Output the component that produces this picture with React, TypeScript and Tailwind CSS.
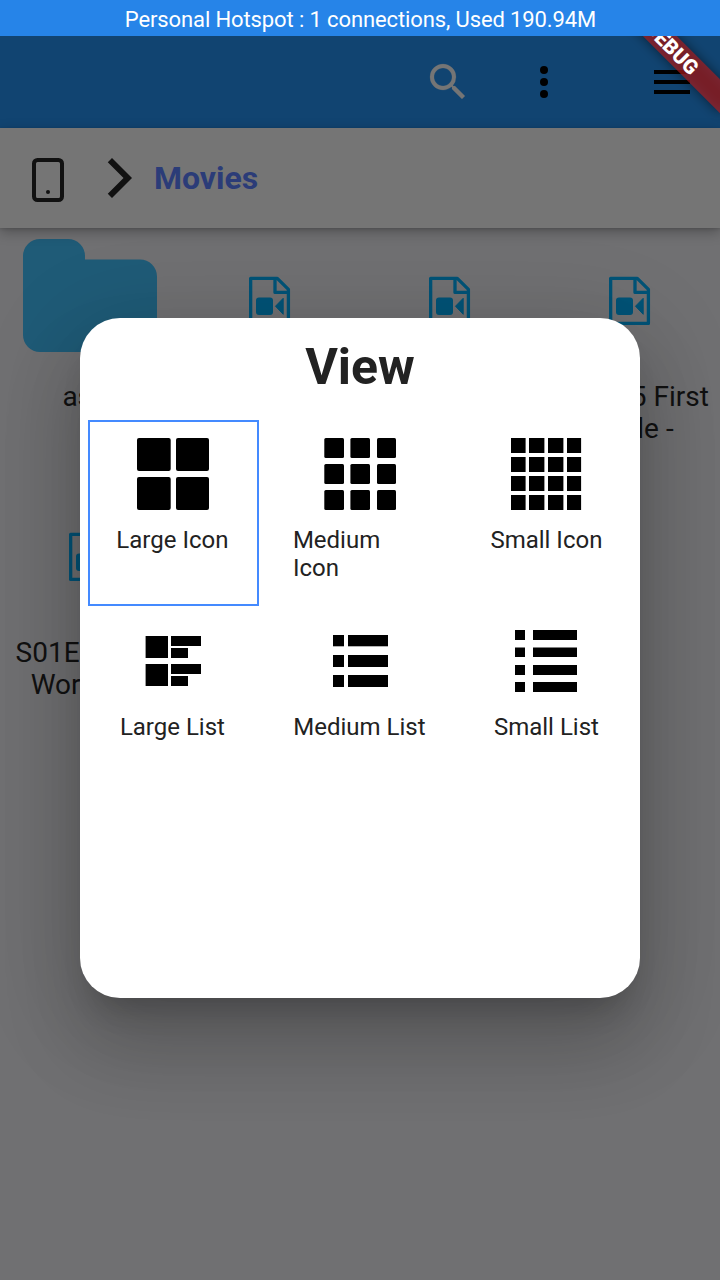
import React from "react";

type Rect = [number, number, number, number];

function RectIcon({ rects, r = 0 }: { rects: Rect[]; r?: number }) {
  return (
    <svg className="block h-[72px] w-[72px] shrink-0 fill-black" viewBox="0 0 72 72">
      {rects.map(([x, y, w, h]) => (
        <rect key={`${x}-${y}`} x={x} y={y} width={w} height={h} rx={r} />
      ))}
    </svg>
  );
}

const cross = (xs: [number, number][], ys: [number, number][]): Rect[] =>
  ys.flatMap(([y, h]) => xs.map(([x, w]): Rect => [x, y, w, h]));

const largeIcon = cross([[0, 33.7], [39, 33]], [[0, 33], [39, 33]]);
const mediumIcon = cross([[0.3, 19.7], [26.4, 19.6], [53, 19]], [[0, 20], [26, 20], [52, 20]]);
const smallIcon = cross([[0, 14.6], [18, 15.4], [37, 15.4], [56, 14.1]], [[0, 15], [19, 15], [38, 15], [57, 15]]);
const largeList: Rect[] = [
  [8.6, 11, 22.4, 22], [34, 11, 30, 10], [34, 23, 17, 10],
  [8.6, 39, 22.4, 22], [34, 39, 30, 10], [34, 51, 17, 10],
];
const mediumList = cross([[9, 11], [24, 40]], [[10, 11.3], [30, 12], [50, 12]]);
const smallList = cross([[4, 10], [22, 44]], [[5, 10], [22.5, 9.5], [40, 10], [57, 10]]);

function ViewOption({ label, children, selected }: { label: React.ReactNode; children: React.ReactNode; selected?: boolean }) {
  return (
    <div
      className={
        selected
          ? "-mr-px flex h-[186px] flex-col items-center border-2 border-[#448aff] pt-4 pr-px"
          : "flex h-[186px] flex-col items-center pt-[18px]"
      }
    >
      {children}
      <span className="mt-4 mr-[1.2px] text-[24px] leading-[28px] whitespace-nowrap text-[#222222]">{label}</span>
    </div>
  );
}

function VideoFile() {
  return (
    <svg className="block h-[50px] w-[42px]" viewBox="0 0 42 50" fill="none" stroke="#005377" strokeWidth="3.3" strokeLinejoin="round">
      <path d="M1.65 2.35H28.3L39.4 13.3V47.4H1.65Z" />
      <path d="M26 2.35V16.4H39.4" />
      <rect x="7" y="21.5" width="17" height="17.4" rx="3" fill="#005377" stroke="none" />
      <path d="M26.5 30.2L34.2 22.3V38.3Z" fill="#005377" stroke="#005377" strokeWidth="1" />
    </svg>
  );
}

function FileTile({ lines = [] }: { lines?: string[] }) {
  return (
    <div className="flex h-64 flex-col items-center pt-12">
      <VideoFile />
      <p className="mt-[55px] text-center text-[28px] leading-[32px] whitespace-nowrap">
        {lines.map((line) => (
          <span key={line} className="block">{line}</span>
        ))}
      </p>
    </div>
  );
}

export default function App() {
  return (
    <div className="relative flex h-[1280px] w-[720px] flex-col overflow-hidden bg-[#707072] font-['Roboto',sans-serif] text-[#111111]">
      <div className="relative z-20 flex h-9 shrink-0 items-center justify-center bg-[#2684e8] pt-[3px] pl-px text-[22px] tracking-[-0.115px] text-white">
        Personal Hotspot : 1 connections, Used 190.94M
      </div>

      <header className="flex h-[92px] shrink-0 items-center justify-end bg-[#114471] pr-6">
        <svg className="mr-12 h-12 w-12 fill-[#757575]" viewBox="0 0 24 24">
          <path d="M15.5 14h-.79l-.28-.27A6.471 6.471 0 0 0 16 9.5 6.5 6.5 0 1 0 9.5 16c1.61 0 3.09-.59 4.23-1.57l.27.28v.79l5 4.99L20.49 19l-4.99-5zm-6 0C7.01 14 5 11.99 5 9.5S7.01 5 9.5 5 14 7.01 14 9.5 11.99 14 9.5 14z" stroke="#757575" strokeWidth="0.1" />
        </svg>
        <svg className="mr-20 h-12 w-12 fill-black" viewBox="0 0 48 48">
          <circle cx="24" cy="12" r="4" />
          <circle cx="24" cy="24" r="4" />
          <circle cx="24" cy="36" r="4" />
        </svg>
        <svg className="h-12 w-12 fill-black" viewBox="0 0 24 24">
          <path d="M3 18h18v-2H3v2zm0-5h18v-2H3v2zm0-7v2h18V6H3z" />
        </svg>
      </header>

      <nav className="relative flex h-[100px] shrink-0 items-center bg-[#757575] pl-6 shadow-[0_4px_12px_rgba(0,0,0,0.28),0_1px_3px_rgba(0,0,0,0.12)]">
        <svg className="mt-1 h-12 w-12" viewBox="0 0 48 48" fill="none" stroke="#111111" strokeWidth="4">
          <rect x="10" y="4" width="28" height="40" rx="3.5" />
          <circle cx="24" cy="36" r="2" fill="#111111" stroke="none" />
        </svg>
        <svg className="ml-6 h-12 w-12 fill-[#111111]" viewBox="0 0 24 24">
          <path d="M5.88 4.12 13.76 12l-7.88 7.88L8 22l10-10L8 2z" />
        </svg>
        <span className="ml-2.5 text-[32px] font-bold text-[#2b3c78]">Movies</span>
      </nav>

      <main className="grid grid-cols-4">
        <div className="flex h-64 flex-col items-center pt-[10px]">
          <svg className="block h-[114px] w-[134px] fill-[#1f5b77]" viewBox="0 0 134 114">
            <path d="M17 1H45A17 17 0 0 1 62 18V21.5H117A17 17 0 0 1 134 38.5V97A17 17 0 0 1 117 114H17A17 17 0 0 1 0 97V18A17 17 0 0 1 17 1Z" />
          </svg>
          <p className="mt-[29px] text-[28px] leading-[32px]">asdf</p>
        </div>
        <FileTile />
        <FileTile />
        <FileTile lines={["S01E05 First", "Battle -"]} />
        <FileTile lines={["S01E06 The", "World - M"]} />
      </main>

      <div className="absolute top-0 left-[720px] z-10 h-0 w-0 origin-top-left rotate-45">
        <div className="absolute top-14 -left-20 h-6 w-40 bg-black/50 blur-[6px]" />
        <div className="absolute top-14 -left-20 flex h-6 w-40 items-center justify-center bg-[#b71c1c]/63 text-[20.4px] leading-6 font-black text-white">
          DEBUG
        </div>
      </div>

      <section
        role="dialog"
        className="absolute top-[318px] left-20 z-10 flex h-[680px] w-[560px] flex-col rounded-[40px] bg-white px-2 shadow-[0_22px_30px_-14px_rgba(0,0,0,0.2),0_48px_76px_6px_rgba(0,0,0,0.14),0_18px_92px_16px_rgba(0,0,0,0.12)]"
      >
        <h1 className="flex h-[102px] shrink-0 items-center justify-center pb-1 text-[50px] font-bold text-[#222222]">View</h1>
        <div className="grid grid-cols-[170px_170px_170px] gap-x-[17px] gap-y-px">
          <ViewOption label="Large Icon" selected>
            <RectIcon rects={largeIcon} r={2} />
          </ViewOption>
          <ViewOption label={<span className="-mr-px block w-[134px]">Medium<br />Icon</span>}>
            <RectIcon rects={mediumIcon} r={1.5} />
          </ViewOption>
          <ViewOption label="Small Icon">
            <RectIcon rects={smallIcon} />
          </ViewOption>
          <ViewOption label="Large List">
            <RectIcon rects={largeList} />
          </ViewOption>
          <ViewOption label="Medium List">
            <RectIcon rects={mediumList} />
          </ViewOption>
          <ViewOption label="Small List">
            <RectIcon rects={smallList} />
          </ViewOption>
        </div>
      </section>
    </div>
  );
}
